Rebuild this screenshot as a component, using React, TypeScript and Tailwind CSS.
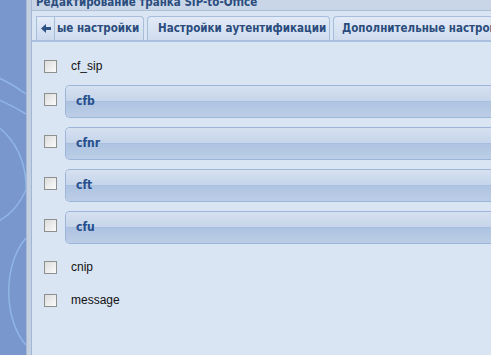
import React from "react";

const TF = { fontFamily: "'DejaVu Sans Condensed', 'DejaVu Sans', sans-serif" };

const Check = () => (
  <div className="w-[13px] h-[13px] border border-[#8f8f8f] bg-gradient-to-br from-[#dcdcdc] to-[#fbfbfb] shrink-0" />
);

const Group = ({ label }: { label: string }) => (
  <div className="flex items-start gap-[8px]">
    <div className="pt-[8px]"><Check /></div>
    <div className="flex-1 h-[33px] rounded-l-[5px] border border-r-0 border-[#9db5d8] overflow-hidden flex flex-col relative">
      <div className="h-[16px] bg-gradient-to-b from-[#d6e1f1] to-[#c6d5ea] border-b border-[#a9bfdf]" />
      <div className="flex-1 bg-gradient-to-b from-[#aec4e2] to-[#bccde6]" />
      <span className="absolute left-[10px] top-[8px] text-[12px] font-bold text-[#264f8c] leading-[15px]" style={TF}>{label}</span>
    </div>
  </div>
);

const Plain = ({ label }: { label: string }) => (
  <div className="flex items-center gap-[13px] h-[16px]">
    <Check />
    <span className="text-[12px] text-[#111] pl-[1px]" style={{ fontFamily: "'Liberation Sans', Arial, sans-serif" }}>{label}</span>
  </div>
);

export default function App() {
  return (
    <div className="w-[491px] h-[355px] overflow-hidden flex bg-[#dae5f3]" style={{ fontFamily: "'DejaVu Sans', sans-serif" }}>
      <div className="w-[26px] h-full bg-[#7a97cd] relative overflow-hidden shrink-0">
        <svg width="26" height="355" className="absolute inset-0">
          <path d="M-10 74 Q 10 82 26 94" stroke="#8fb6e4" strokeWidth="1.5" fill="none" />
          <path d="M-10 96 Q 10 104 26 114" stroke="#8fb6e4" strokeWidth="1.5" fill="none" />
          <path d="M-30 118 A 55 70 0 0 1 26 190 A 60 70 0 0 1 -10 225" stroke="#8fb6e4" strokeWidth="1.5" fill="none" />
          <path d="M26 238 A 40 65 0 0 0 26 345" stroke="#8fb6e4" strokeWidth="1.5" fill="none" />
        </svg>
      </div>
      <div className="w-[6px] h-full bg-[#c3d0e2] border-l border-[#a9b9d2] border-r border-r-[#a3b7d4] shrink-0" />
      <div className="flex-1 flex flex-col min-w-0">
        <div className="h-[11px] bg-[#c8d6e8] border-b border-[#aebfd7] overflow-hidden relative">
          <span className="absolute left-[4px] top-[-6px] text-[11.5px] font-bold text-[#2b4c7d] whitespace-nowrap" style={TF}>Редактирование транка SIP-to-Office</span>
        </div>
        <div className="h-[6px]" />
        <div className="flex items-end h-[25px] border-b-2 border-[#a9c0e0] pl-[4px] gap-[3px]">
          <div className="h-[24px] w-[19px] shrink-0 bg-gradient-to-b from-[#e4ecf7] to-[#cbd9ee] border border-b-0 border-[#a7bddc] flex items-center justify-center">
            <svg width="10" height="9" viewBox="0 0 10 9"><path d="M0 4.5 L5 0 V3 H10 V6 H5 V9 Z" fill="#2e5285" /></svg>
          </div>
          <div className="h-[24px] -ml-[3px] w-[89px] shrink-0 pl-[2px] rounded-tr-[4px] bg-gradient-to-b from-[#e2eaf6] to-[#d0ddef] border border-b-0 border-l-0 border-[#a7bddc] flex items-center text-[11.5px] font-bold text-[#2b4c7d] whitespace-nowrap" style={TF}>ые настройки</div>
          <div className="h-[24px] w-[183px] shrink-0 pl-[10px] rounded-t-[4px] bg-gradient-to-b from-[#e2eaf6] to-[#d0ddef] border border-b-0 border-[#a7bddc] flex items-center text-[11.5px] font-bold text-[#2b4c7d] whitespace-nowrap" style={TF}>Настройки аутентификации</div>
          <div className="h-[24px] flex-1 min-w-0 pl-[8px] rounded-tl-[4px] bg-gradient-to-b from-[#e2eaf6] to-[#d0ddef] border border-b-0 border-r-0 border-[#a7bddc] flex items-center text-[11.5px] font-bold text-[#2b4c7d] whitespace-nowrap overflow-hidden" style={TF}>Дополнительные настрой</div>
        </div>
        <div className="flex flex-col pl-[12px] pt-[16px]">
          <Plain label="cf_sip" />
          <div className="h-[11px]" />
          <div className="flex flex-col gap-[9px]">
            <Group label="cfb" />
            <Group label="cfnr" />
            <Group label="cft" />
            <Group label="cfu" />
          </div>
          <div className="h-[15px]" />
          <div className="flex flex-col gap-[17px]">
            <Plain label="cnip" />
            <Plain label="message" />
          </div>
        </div>
      </div>
    </div>
  );
}
